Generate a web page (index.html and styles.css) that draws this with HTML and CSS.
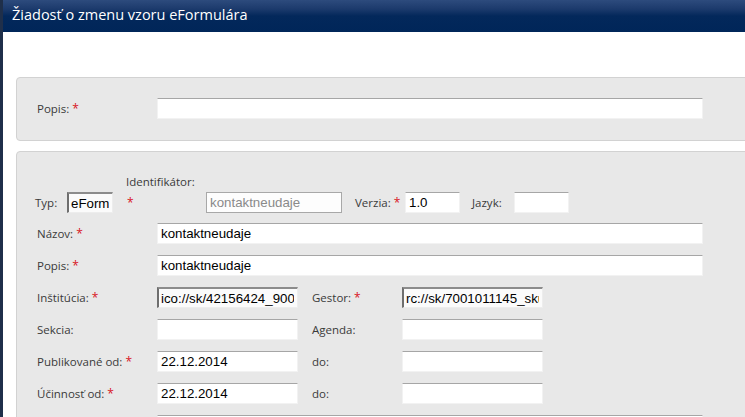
FILE: index.html
```html
<!DOCTYPE html>
<html lang="sk">
<head>
<meta charset="utf-8">
<title>Žiadosť o zmenu vzoru eFormulára</title>
<link rel="stylesheet" href="styles.css">
</head>
<body>
<div class="window">
  <div class="titlebar">Žiadosť o zmenu vzoru eFormulára</div>
  <div class="content">
    <div class="panel panel-top">
      <div class="row wide">
        <label class="lbl">Popis: <span class="req">*</span></label>
        <input class="inp" type="text" value="">
      </div>
    </div>
    <div class="panel panel-main">
      <div class="row first">
        <label class="lbl typ">Typ:</label>
        <input class="inp ro w-typ" type="text" value="eForm">
        <div class="ident">
          <span class="lbl">Identifikátor:</span>
          <span class="req">*</span>
        </div>
        <input class="inp boxed w-ident" type="text" value="kontaktneudaje">
        <label class="lbl verzia">Verzia: <span class="req">*</span></label>
        <input class="inp w-small" type="text" value="1.0">
        <label class="lbl jazyk">Jazyk:</label>
        <input class="inp w-small" type="text" value="">
      </div>
      <div class="row wide">
        <label class="lbl">Názov: <span class="req">*</span></label>
        <input class="inp" type="text" value="kontaktneudaje">
      </div>
      <div class="row wide">
        <label class="lbl">Popis: <span class="req">*</span></label>
        <input class="inp" type="text" value="kontaktneudaje">
      </div>
      <div class="row split">
        <label class="lbl">Inštitúcia: <span class="req">*</span></label>
        <input class="inp ro" type="text" value="ico://sk/42156424_90000">
        <label class="lbl">Gestor: <span class="req">*</span></label>
        <input class="inp ro" type="text" value="rc://sk/7001011145_skuska">
      </div>
      <div class="row split">
        <label class="lbl">Sekcia:</label>
        <input class="inp" type="text" value="">
        <label class="lbl">Agenda:</label>
        <input class="inp" type="text" value="">
      </div>
      <div class="row split">
        <label class="lbl">Publikované od: <span class="req">*</span></label>
        <input class="inp" type="text" value="22.12.2014">
        <label class="lbl">do:</label>
        <input class="inp" type="text" value="">
      </div>
      <div class="row split">
        <label class="lbl">Účinnosť od: <span class="req">*</span></label>
        <input class="inp" type="text" value="22.12.2014">
        <label class="lbl">do:</label>
        <input class="inp" type="text" value="">
      </div>
      <div class="row wide">
        <label class="lbl"></label>
        <input class="inp" type="text" value="">
      </div>
    </div>
  </div>
</div>
</body>
</html>
```

FILE: styles.css
```css
html, body {
  margin: 0;
  padding: 0;
  background: #ffffff;
  overflow: hidden;
}

.window {
  width: 745px;
  height: 417px;
  overflow: hidden;
  border-left: 3px solid #1f2f4a;
  box-sizing: border-box;
  background: #ffffff;
}

.titlebar {
  height: 32px;
  box-sizing: border-box;
  padding: 5px 0 0 9px;
  color: #ffffff;
  font-family: "Open Sans", "DejaVu Sans", sans-serif;
  font-size: 14.5px;
  line-height: 20px;
  background: linear-gradient(to bottom, #2d4b7d 0px, #1c3a6c 9px, #03285b 16px, #002659 32px);
}

.content {
  padding: 45px 0 0 13px;
}

.panel {
  background: #e8e8e8;
  border: 1px solid #d2d2d2;
  border-radius: 4px;
  width: 760px;
  box-sizing: border-box;
  padding-left: 20px;
}

.panel-top {
  padding-top: 20px;
  padding-bottom: 21px;
  margin-bottom: 10px;
}

.panel-top .row {
  margin-bottom: 0;
}

.panel-main {
  padding-top: 21px;
}

.lbl {
  font-family: "Open Sans", "DejaVu Sans", sans-serif;
  font-size: 11.5px;
  color: #3a3a3a;
  white-space: nowrap;
}

.req {
  color: #d8141e;
  font-family: "Open Sans", "DejaVu Sans", sans-serif;
  font-size: 12px;
}

.row {
  display: grid;
  align-items: center;
  height: 21px;
  margin-bottom: 11px;
}

.row.wide {
  grid-template-columns: 120px 546px;
}

.row.split {
  grid-template-columns: 120px 141px 14px 90px 141px;
}

.row.split .lbl:nth-of-type(2) {
  grid-column: 4;
}

.row.first {
  display: flex;
  align-items: flex-end;
  height: auto;
  margin-bottom: 10px;
}

.inp {
  height: 21px;
  box-sizing: border-box;
  margin: 0;
  padding: 0 3px;
  border: 1px solid #f2f2f2;
  border-top: 1px solid #a6a6a6;
  background: #ffffff;
  font-family: "Liberation Sans", Arial, sans-serif;
  font-size: 13.3px;
  color: #000000;
  outline: none;
  width: 100%;
}

.inp.ro {
  border-top: 2px solid #8c8c8c;
  border-left: 2px solid #6e6e6e;
  border-right: 1px solid #ededed;
  border-bottom: 1px solid #ededed;
  background: #fbfbfb;
  padding-left: 2px;
}

.inp.boxed {
  border: 1px solid #a8a8a8;
  background: #fdfdfd;
  color: #8a8a8a;
}

.typ {
  margin-left: -2px;
  width: 32px;
  line-height: 20px;
}

.w-typ {
  width: 46px;
  flex: none;
}

.ident {
  display: flex;
  flex-direction: column;
  width: 80px;
  margin-left: 13px;
  flex: none;
}

.ident .lbl {
  line-height: 18px;
  margin-bottom: 2px;
}

.ident .req {
  line-height: 20px;
  padding-left: 1px;
}

.w-ident {
  width: 136px;
  flex: none;
}

.verzia {
  width: 50px;
  margin-left: 13px;
  line-height: 20px;
  flex: none;
}

.jazyk {
  width: 42px;
  margin-left: 12px;
  line-height: 20px;
  flex: none;
}

.w-small {
  width: 55px;
  flex: none;
}
```
